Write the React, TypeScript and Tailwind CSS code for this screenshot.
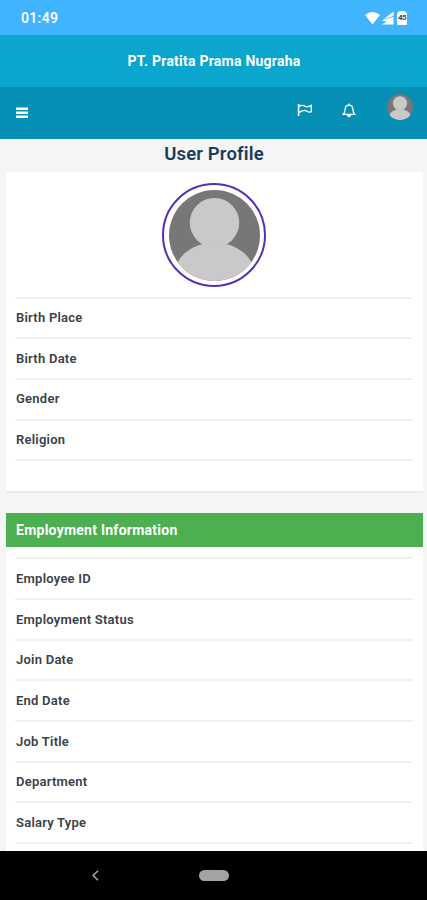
import { useState } from "react";

const personalFields = ["Birth Place", "Birth Date", "Gender", "Religion"];

const employmentFields = [
  "Employee ID",
  "Employment Status",
  "Join Date",
  "End Date",
  "Job Title",
  "Department",
  "Salary Type",
];

function Avatar({ className }: { className: string }) {
  return (
    <svg viewBox="0 0 92 92" className={`rounded-full ${className}`} aria-label="Avatar">
      <rect width="92" height="92" fill="#777777" />
      <ellipse cx="46" cy="87" rx="41" ry="34" fill="#c9c9c9" />
      <circle cx="46" cy="33" r="25" fill="#c9c9c9" />
    </svg>
  );
}

function FieldRows({ fields }: { fields: string[] }) {
  return (
    <ul className="mr-[10px] ml-[9px]">
      {fields.map((field) => (
        <li
          key={field}
          className="flex h-[40.7px] items-center border-t-2 border-[#f1f1f2] pl-px text-[13px] font-semibold tracking-[0.24px] text-[#3b4148]"
        >
          {field}
        </li>
      ))}
      <li className="border-t-2 border-[#f1f1f2]" />
    </ul>
  );
}

function StatusBar() {
  return (
    <div className="flex h-[35px] shrink-0 items-center justify-between bg-[#40b4fe] pr-[20px] pl-[21px] text-white">
      <span className="pt-[2px] text-[14px] font-semibold tracking-[0.3px]">01:49</span>
      <div className="flex items-center">
        <svg width="15" height="14" viewBox="0 0 15 14" fill="currentColor">
          <path d="M0 4Q7.5-2 15 4L7.5 13.5Z" />
        </svg>
        <svg width="13" height="14" viewBox="0 0 13 14" fill="currentColor" className="ml-px">
          <path d="M12.5 0.5V5L2.5 8.2ZM0.5 9.3L12.5 6V13.5H0.5L6 11Z" />
        </svg>
        <div className="ml-[3px] flex h-[14px] w-[10px] items-center justify-center rounded-t-[4px] rounded-b-[1px] bg-white text-[8px] font-bold tracking-[-0.5px] text-[#34485a]">
          45
        </div>
      </div>
    </div>
  );
}

export default function App() {
  const [menuOpen, setMenuOpen] = useState(false);

  return (
    <div className="flex h-[900px] w-[427px] flex-col overflow-hidden bg-[#f5f5f5] font-['Roboto',sans-serif]">
      <StatusBar />

      {/* Company name */}
      <header className="flex h-[52px] shrink-0 items-center justify-center bg-[#0aa6ce] pl-px text-[14px] font-bold tracking-[0.24px] text-white">
        PT. Pratita Prama Nugraha
      </header>

      {/* Toolbar */}
      <nav className="flex h-[52px] shrink-0 items-center bg-[#0790b6] pr-[14px] pl-4 text-white">
        <button aria-label="Menu" aria-expanded={menuOpen} onClick={() => setMenuOpen(!menuOpen)}>
          <svg width="12" height="12" viewBox="0 0 12 12" fill="currentColor">
            <path d="M0 0.5h12v2.5H0zM0 4.5h12v2.5H0zM0 8.5h12v2.5H0z" />
          </svg>
        </button>
        <svg
          width="16"
          height="14"
          viewBox="0 0 16 14"
          fill="none"
          stroke="currentColor"
          strokeWidth="1.3"
          className="mb-[6px] ml-auto"
        >
          <path d="M1.6 1V13" strokeWidth="1.6" />
          <path d="M2 3.2C4.5 2 6.5 2 8 3.2S11.5 3.8 14.3 2.4V8.6C12 9.8 10.5 9 9 7.8S5 7.6 2 9.6" />
        </svg>
        <svg
          width="14"
          height="15"
          viewBox="0 0 14 15"
          fill="none"
          stroke="currentColor"
          strokeWidth="1.3"
          className="mb-[5px] ml-[29px]"
        >
          <path d="M1.2 11.4C3 9.8 3 8 3.2 6C3.4 3.6 5 2.2 7 2.2S10.6 3.6 10.8 6C11 8 11 9.8 12.8 11.4Z" />
          <path d="M7 2.2V0.4" />
          <path d="M4.8 11.8H9.2Q9 14.2 7 14.2T4.8 11.8Z" fill="currentColor" stroke="none" />
        </svg>
        <Avatar className="mb-[12px] ml-[31px] size-[26px]" />
      </nav>

      <h1 className="flex h-[33px] shrink-0 items-center justify-center pb-[2px] pl-px text-[18.5px] font-semibold tracking-[0.15px] text-[#173c5c]">
        User Profile
      </h1>

      <main className="flex min-h-0 flex-1 flex-col gap-[20px] overflow-hidden pr-[4px] pl-[6px]">
        {/* Personal data */}
        <section className="h-[321px] shrink-0 border-b-2 border-[#ececec] bg-white">
          <div className="flex h-[124.5px] justify-center pt-[11px] pr-px">
            <div className="flex size-[104px] items-center justify-center rounded-full border-[2.5px] border-[#5630b2] bg-white">
              <Avatar className="size-[91px]" />
            </div>
          </div>
          <FieldRows fields={personalFields} />
        </section>

        {/* Employment data */}
        <section className="shrink-0 bg-white">
          <h2 className="mb-[10.3px] flex h-[34px] items-center bg-[#4caf50] pl-[10px] text-[14px] font-bold tracking-[0.25px] text-white">
            Employment Information
          </h2>
          <FieldRows fields={employmentFields} />
          <div className="h-[20px]" />
        </section>
      </main>

      {/* Android navigation */}
      <footer className="flex h-[49px] shrink-0 items-center bg-black pl-[92px]">
        <svg width="7" height="11" viewBox="0 0 7 11" fill="none" stroke="#a3a3a3" strokeWidth="1.6">
          <path d="M6 0.8L1.2 5.5L6 10.2" />
        </svg>
        <div className="ml-[100px] h-[11px] w-[30px] rounded-full bg-[#a3a3a3]" />
      </footer>
    </div>
  );
}
